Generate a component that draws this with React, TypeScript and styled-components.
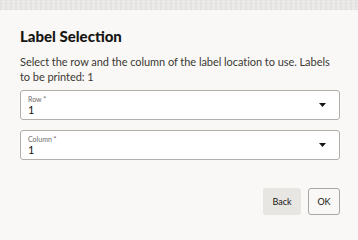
import React from 'react';
import styled, { createGlobalStyle } from 'styled-components';

const GlobalStyle = createGlobalStyle`
  html, body {
    margin: 0;
    padding: 0;
    width: 358px;
    height: 234px;
    overflow: hidden;
    background: #f9f8f6;
    font-family: Lato, "Noto Sans", sans-serif;
  }
`;

const Page = styled.div`
  width: 358px;
  height: 234px;
  display: flex;
  flex-direction: column;
`;

const Backdrop = styled.div`
  height: 10px;
  flex-shrink: 0;
  background:
    repeating-linear-gradient(90deg, rgba(0, 0, 0, 0.03) 0 2px, transparent 2px 5px),
    repeating-linear-gradient(0deg, rgba(0, 0, 0, 0.02) 0 1px, transparent 1px 3px),
    #ecebe9;
`;

const Dialog = styled.div`
  flex: 1;
  background: #f9f8f6;
  padding: 16px 18px 0 20px;
  display: flex;
  flex-direction: column;
`;

const Title = styled.h1`
  margin: 0;
  font-size: 15px;
  line-height: 20px;
  font-weight: 900;
  color: #161513;
`;

const Description = styled.p`
  margin: 8px 0 0;
  font-size: 11px;
  line-height: 15px;
  letter-spacing: -0.05px;
  color: #3b3835;
`;

const Fields = styled.div`
  margin-top: 6px;
  display: flex;
  flex-direction: column;
  gap: 10px;
`;

const SelectBox = styled.div`
  height: 30px;
  box-sizing: border-box;
  border: 1px solid #b3afab;
  border-radius: 3px;
  background: #ffffff;
  padding: 0 13px 0 7px;
  display: flex;
  align-items: center;
  justify-content: space-between;
`;

const FieldText = styled.div`
  display: flex;
  flex-direction: column;
`;

const FieldLabel = styled.span`
  font-size: 7px;
  line-height: 8px;
  color: #6f6b67;
`;

const FieldValue = styled.span`
  font-size: 11px;
  line-height: 13px;
  color: #161513;
`;

const Caret = styled.svg`
  width: 7px;
  height: 4px;
  fill: #161513;
`;

const Footer = styled.div`
  margin-top: 28px;
  display: flex;
  justify-content: flex-end;
  gap: 7px;
`;

const Button = styled.button<{ $outlined?: boolean }>`
  height: 27px;
  min-width: ${(p) => (p.$outlined ? '32px' : '38px')};
  padding: 0 6px;
  box-sizing: border-box;
  border-radius: 3px;
  border: 1px solid ${(p) => (p.$outlined ? '#a9a6a2' : 'transparent')};
  background: ${(p) => (p.$outlined ? 'transparent' : '#e8e6e3')};
  font-family: inherit;
  font-size: 9px;
  color: #161513;
`;

function Select({ label, value }: { label: string; value: string }) {
  return (
    <SelectBox>
      <FieldText>
        <FieldLabel>{label} *</FieldLabel>
        <FieldValue>{value}</FieldValue>
      </FieldText>
      <Caret viewBox="0 0 7 4">
        <path d="M0 0 H7 L3.5 4 Z" />
      </Caret>
    </SelectBox>
  );
}

export default function App() {
  return (
    <Page>
      <GlobalStyle />
      <Backdrop />
      <Dialog>
        <Title>Label Selection</Title>
        <Description>
          Select the row and the column of the label location to use. Labels to be printed: 1
        </Description>
        <Fields>
          <Select label="Row" value="1" />
          <Select label="Column" value="1" />
        </Fields>
        <Footer>
          <Button>Back</Button>
          <Button $outlined>OK</Button>
        </Footer>
      </Dialog>
    </Page>
  );
}
